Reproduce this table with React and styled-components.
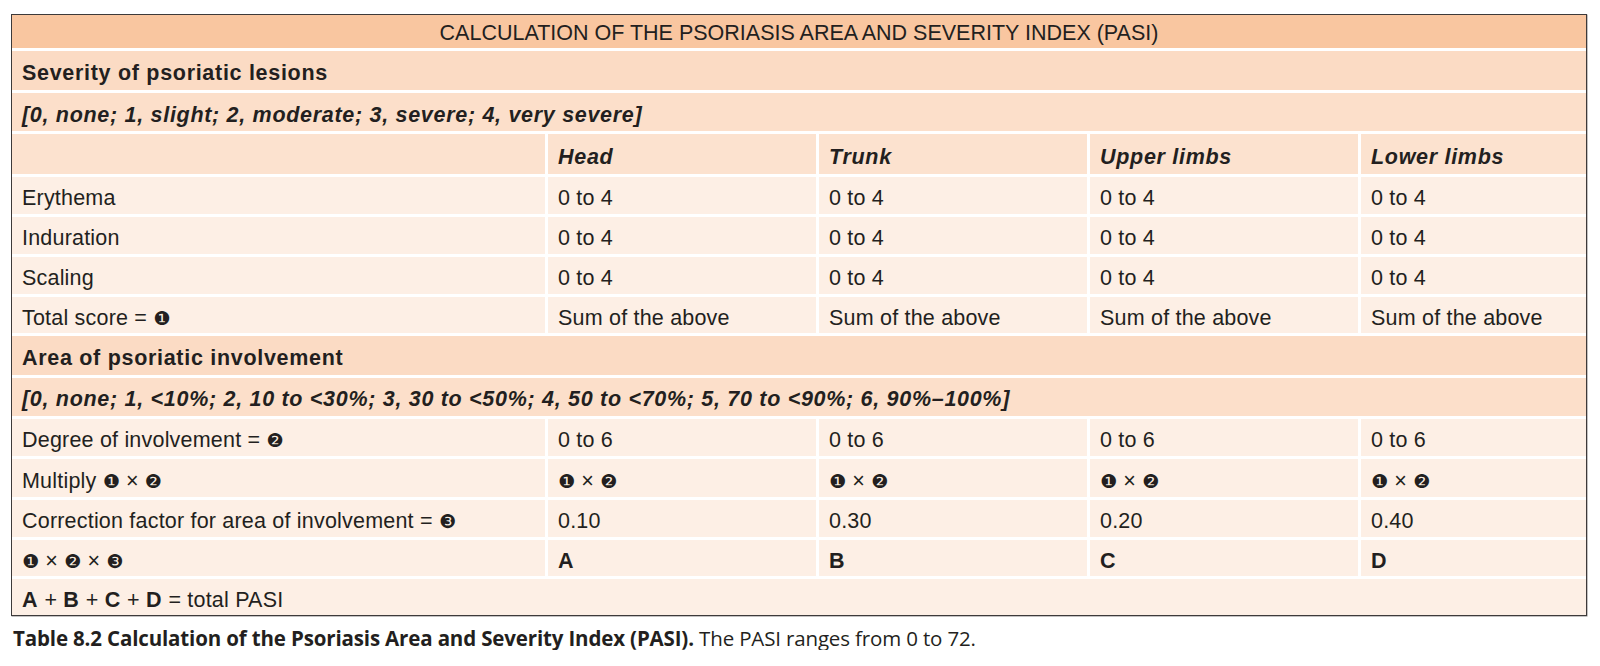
import React from "react";
import styled, { createGlobalStyle } from "styled-components";

const GlobalStyle = createGlobalStyle`
  html, body { margin: 0; padding: 0; background: #fff; }
  body {
    font-family: "Liberation Sans", Arial, sans-serif;
    color: #231f20;
    -webkit-font-smoothing: antialiased;
  }
`;

const tones = {
  title: "#f9c6a0",
  section: "#fbdbc4",
  note: "#fcdfca",
  head: "#fce2cf",
  body: "#fdefe5",
};

const regions = ["Head", "Trunk", "Upper limbs", "Lower limbs"];
const factors = ["0.10", "0.30", "0.20", "0.40"];
const letters = ["A", "B", "C", "D"];

export default function App() {
  const severityRows = [
    { label: "Erythema", value: "0 to 4" },
    { label: "Induration", value: "0 to 4" },
    { label: "Scaling", value: "0 to 4" },
    { label: <>Total score = <Num>❶</Num></>, value: "Sum of the above" },
  ];

  const oneTimesTwo = (
    <>
      <Num>❶</Num> × <Num>❷</Num>
    </>
  );

  return (
    <Page>
      <GlobalStyle />
      <Table>
        <Cell $tone="title" $span $center>
          CALCULATION OF THE PSORIASIS AREA AND SEVERITY INDEX (PASI)
        </Cell>

        <Cell $tone="section" $span $bold>Severity of psoriatic lesions</Cell>
        <Cell $tone="note" $span $bold $italic>
          [0, none; 1, slight; 2, moderate; 3, severe; 4, very severe]
        </Cell>

        <Cell $tone="head" />
        {regions.map((r) => (
          <Cell key={r} $tone="head" $bold $italic>{r}</Cell>
        ))}

        {severityRows.map((row, i) => (
          <React.Fragment key={i}>
            <Cell $tone="body">{row.label}</Cell>
            {regions.map((r) => (
              <Cell key={r} $tone="body">{row.value}</Cell>
            ))}
          </React.Fragment>
        ))}

        <Cell $tone="section" $span $bold>Area of psoriatic involvement</Cell>
        <Cell $tone="note" $span $bold $italic>
          [0, none; 1, &lt;10%; 2, 10 to &lt;30%; 3, 30 to &lt;50%; 4, 50 to &lt;70%; 5, 70 to &lt;90%; 6, 90%–100%]
        </Cell>

        <Cell $tone="body">Degree of involvement = <Num>❷</Num></Cell>
        {regions.map((r) => (
          <Cell key={r} $tone="body">0 to 6</Cell>
        ))}

        <Cell $tone="body">Multiply {oneTimesTwo}</Cell>
        {regions.map((r) => (
          <Cell key={r} $tone="body">{oneTimesTwo}</Cell>
        ))}

        <Cell $tone="body">Correction factor for area of involvement = <Num>❸</Num></Cell>
        {factors.map((f) => (
          <Cell key={f} $tone="body">{f}</Cell>
        ))}

        <Cell $tone="body">
          <Num>❶</Num> × <Num>❷</Num> × <Num>❸</Num>
        </Cell>
        {letters.map((l) => (
          <Cell key={l} $tone="body" $bold>{l}</Cell>
        ))}

        <Cell $tone="body" $span>
          <b>A</b> + <b>B</b> + <b>C</b> + <b>D</b> = total PASI
        </Cell>
      </Table>

      <Caption>
        <strong>Table 8.2 Calculation of the Psoriasis Area and Severity Index (PASI).</strong>{" "}
        The PASI ranges from 0 to 72.
      </Caption>
    </Page>
  );
}

const Page = styled.div`
  padding: 14px 13px 0 11px;
`;

const Table = styled.div`
  display: grid;
  grid-template-columns: 533px repeat(3, 268px) 1fr;
  grid-template-rows:
    33px 39px 38px 39.5px 37.5px 37px 36.5px 36.5px
    38.5px 38px 37.5px 37.5px 37px 36.5px 35.5px;
  gap: 3px;
  background: #fff;
  border: 1.5px solid #3d3a3a;
  box-shadow: 0.5px 0.5px 0 #8a8686;
`;

const Cell = styled.div`
  grid-column: ${(p) => (p.$span ? "1 / -1" : "auto")};
  display: flex;
  align-items: center;
  justify-content: ${(p) => (p.$center ? "center" : "flex-start")};
  padding: ${(p) => (p.$tone === "title" ? "4px 10px 0" : "7px 10px 0")};
  background: ${(p) => tones[p.$tone] || tones.body};
  font-size: 21.5px;
  font-weight: ${(p) => (p.$bold ? 700 : 400)};
  font-style: ${(p) => (p.$italic ? "italic" : "normal")};
  letter-spacing: ${(p) => (p.$bold ? "0.7px" : p.$tone === "title" ? "0" : "0.2px")};
  white-space: pre;
  line-height: 1;

  b { font-weight: 700; letter-spacing: 0.7px; }
`;

const Num = styled.span`
  font-family: "DejaVu Sans", sans-serif;
  font-size: 19px;
  font-weight: 400;
  font-style: normal;
  letter-spacing: 0;
  line-height: 1;
`;

const Caption = styled.p`
  margin: 10px 0 0 2px;
  font-family: "Open Sans", "Noto Sans", sans-serif;
  font-size: 20.5px;
  letter-spacing: -0.15px;
  line-height: 24px;
  color: #231f20;

  strong { font-weight: 700; }
`;
